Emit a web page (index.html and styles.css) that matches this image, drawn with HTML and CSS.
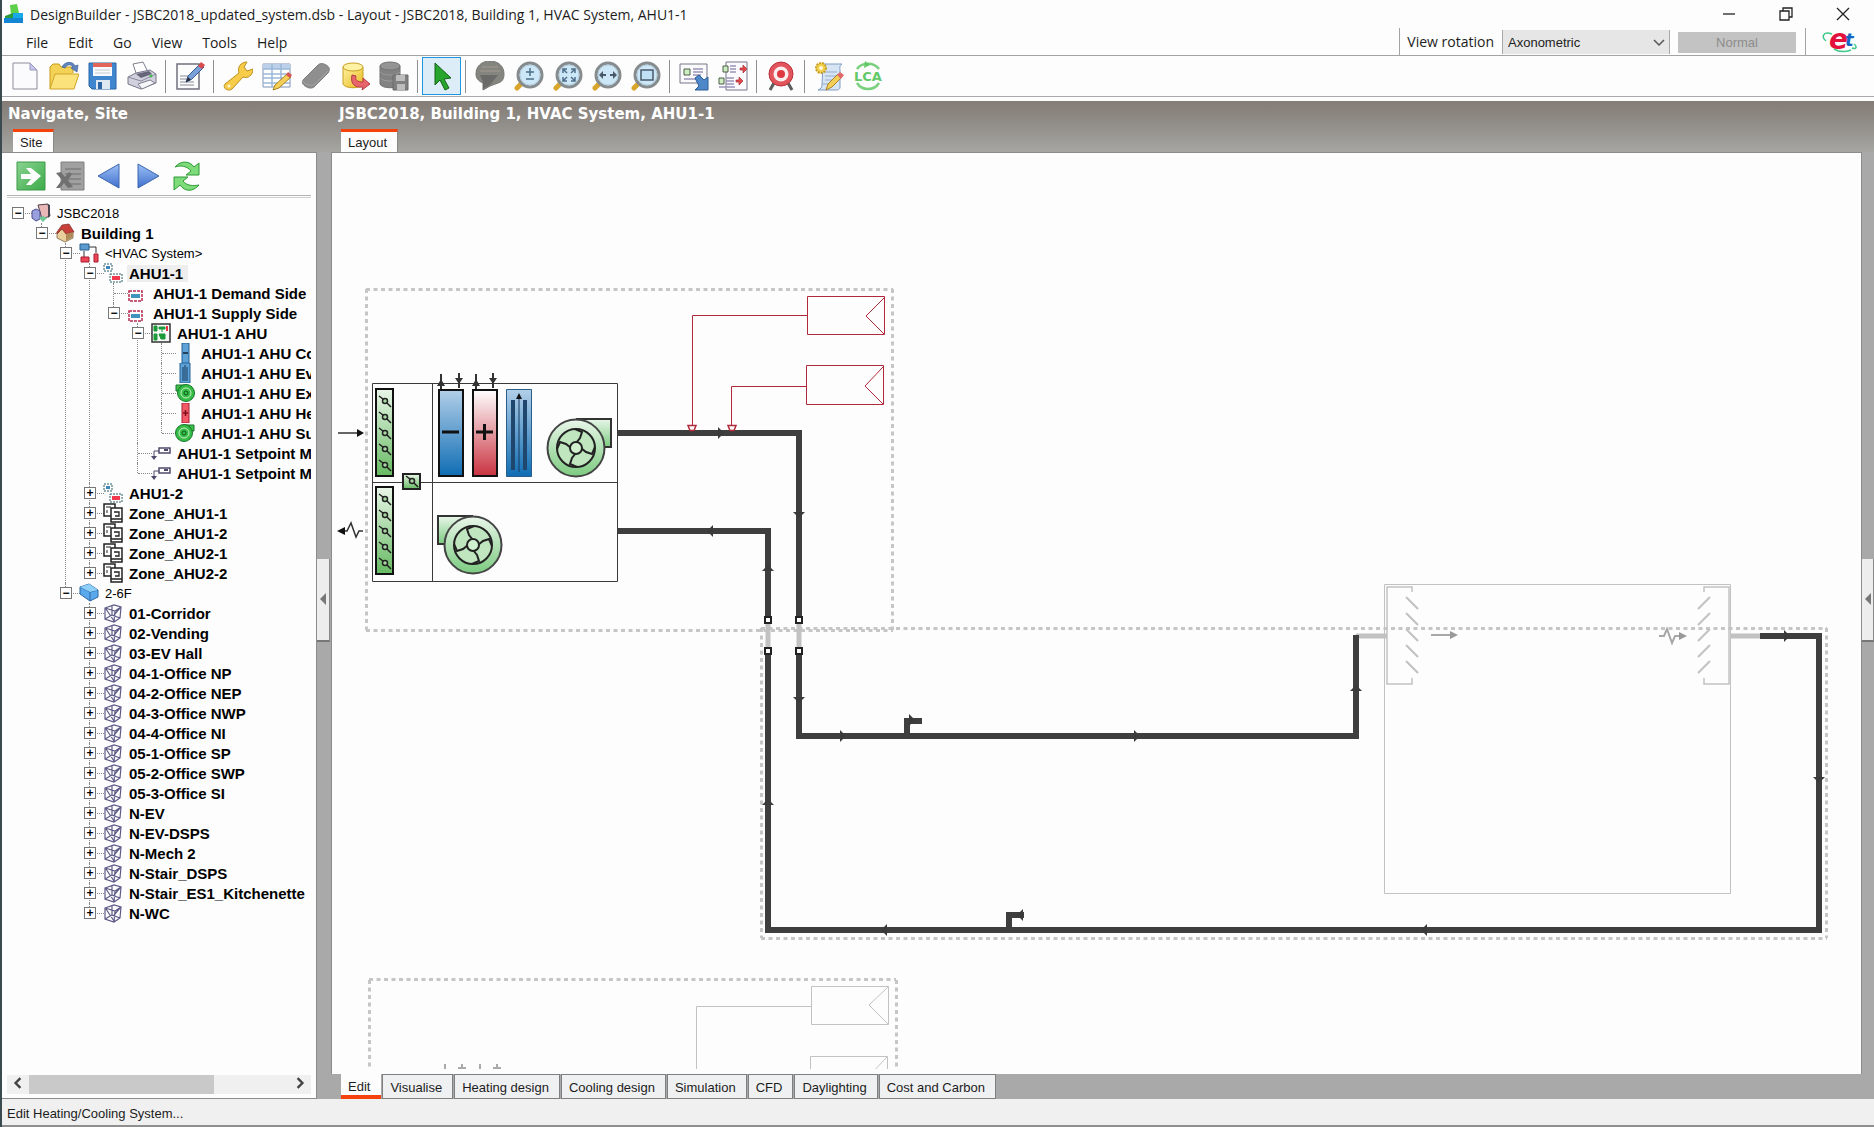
FILE: index.html
```html
<!DOCTYPE html>
<html lang="en">
<head>
<meta charset="utf-8">
<title>DesignBuilder - JSBC2018_updated_system.dsb</title>
<link rel="stylesheet" href="styles.css">
</head>
<body>

<svg class="defs" width="0" height="0" aria-hidden="true">
  <defs>
    <linearGradient id="g-green" x1="0" y1="0" x2="0" y2="1"><stop offset="0" stop-color="#e9f6ea"/><stop offset="1" stop-color="#7ccb80"/></linearGradient>
    <linearGradient id="g-damper" x1="0" y1="0" x2="0" y2="1"><stop offset="0" stop-color="#e9f6e8"/><stop offset="1" stop-color="#66ba62"/></linearGradient>
    <linearGradient id="g-blue" x1="0" y1="0" x2="0" y2="1"><stop offset="0" stop-color="#b2cfe8"/><stop offset="1" stop-color="#0f6db4"/></linearGradient>
    <linearGradient id="g-red" x1="0" y1="0" x2="0" y2="1"><stop offset="0" stop-color="#ffffff"/><stop offset="1" stop-color="#c93240"/></linearGradient>
    <linearGradient id="g-yellow" x1="0" y1="0" x2="1" y2="1"><stop offset="0" stop-color="#fff3a0"/><stop offset="1" stop-color="#e8b820"/></linearGradient>
    <linearGradient id="g-tri" x1="0" y1="0" x2="0" y2="1"><stop offset="0" stop-color="#9cc0f5"/><stop offset="1" stop-color="#3f6fcc"/></linearGradient>
    <linearGradient id="g-go" x1="0" y1="0" x2="1" y2="1"><stop offset="0" stop-color="#8ad391"/><stop offset="1" stop-color="#3bab48"/></linearGradient>

    <symbol id="i-new" viewBox="0 0 30 30"><path d="M3 2h17l7 7v19H3z" fill="#fbfbfd" stroke="#8d8d9c"/><path d="M20 2v7h7z" fill="#c9c6ee" stroke="#9a98c0"/></symbol>
    <symbol id="i-open" viewBox="0 0 30 30"><path d="M1 28V6l3-3h6l2 3h12v6" fill="#f3d255" stroke="#c79a1c"/><path d="M1 28l5-15h24l-5 15z" fill="#fbe27a" stroke="#d0a528"/><path d="M13 6c3-6 11-6 13-1l3-1-1 7-6-4 2-1c-2-3-6-3-8 1z" fill="#5f86c0" stroke="#3f5f96" stroke-width=".7"/></symbol>
    <symbol id="i-save" viewBox="0 0 30 30"><path d="M1 2h27v26H4l-3-3z" fill="#3f86cf" stroke="#2866a8"/><path d="M5 2h19v13H5z" fill="#f7f9fc"/><path d="M5 2h19v4H5z" fill="#e0665a"/><path d="M7 9h15M7 12h15" stroke="#c4ccd6"/><path d="M8 19h14v9H8z" fill="#dfe7f0"/><path d="M10 21h4v7h-4z" fill="#2c66a5"/></symbol>
    <symbol id="i-print" viewBox="0 0 30 30"><path d="M6 3l10-2 5 10-11 4z" fill="#fff" stroke="#80808e"/><path d="M1 16l8-4 14-3 6 4v9l-15 6-13-5z" fill="#d0d0de" stroke="#77778a"/><path d="M1 16l13 4 15-7" fill="none" stroke="#8a8a9c"/><path d="M9 13l13-3 3 3-11 4z" fill="#66667a"/><path d="M11 23l12-4 5 3-13 6z" fill="#f5f5fa" stroke="#80808e"/><circle cx="24" cy="15" r="1.500" fill="#43b94b"/></symbol>
    <symbol id="i-edit" viewBox="0 0 30 30"><path d="M2 3h22v25H2z" fill="#fcfcfd" stroke="#70707e" stroke-width="1.500"/><path d="M5 15h9M5 18h7M5 21h14M5 24h14" stroke="#8a8a98"/><path d="M11 21l2-6L25 3l4 3-12 12z" fill="#7aa0d8" stroke="#3a5c96"/><path d="M23 5l3-4 4 3-3 4z" fill="#d94a4a"/><path d="M11 21l2-5 3 3z" fill="#2b2b36"/></symbol>
    <symbol id="i-wrench" viewBox="0 0 30 30"><path d="M2 23L16 12C14 6 18 1 24 1l-3 5 3 4 6-2c0 6-5 10-10 8L9 28c-4 3-10-1-7-5z" fill="#f7cc4a" stroke="#bd8f1c"/><circle cx="6" cy="25" r="1.500" fill="#fff6cf"/></symbol>
    <symbol id="i-table" viewBox="0 0 30 30"><path d="M1 3h27v23H1z" fill="#fff" stroke="#7d93b5"/><path d="M1 3h27v5H1z" fill="#bcd0ea"/><path d="M1 8h27M1 13h27M1 17h27M1 22h27M10 3v23M19 3v23" stroke="#9ab6d8" stroke-width="1.500"/><path d="M11 29l2-5 12-11 4 3-12 11z" fill="#f4cf58" stroke="#a98426"/><path d="M24 14l2-3 4 3-2 3z" fill="#d95454"/></symbol>
    <symbol id="i-eraser" viewBox="0 0 30 30"><path d="M2 19L17 4c2-2 5-2 8 0 4 2 4 5 2 8L13 26c-3 2-6 1-9-1-3-2-3-4-2-6z" fill="#8f8f8f" stroke="#7c7c7c"/><path d="M2 20c3 4 7 5 11 4L27 10" fill="none" stroke="#a6a6a6"/></symbol>
    <symbol id="i-db" viewBox="0 0 30 30"><path d="M3 6v17c2 5 18 5 20 0V6z" fill="url(#g-yellow)" stroke="#c6a022"/><ellipse cx="13" cy="6" rx="10" ry="4" fill="#fff2a4" stroke="#c6a022"/><path d="M12 14c-2 9 3 13 11 12l-1 3 8-6-7-6v4c-6 0-8-2-7-6z" fill="#e8656c" stroke="#b43b44"/></symbol>
    <symbol id="i-dbsave" viewBox="0 0 30 30"><path d="M1 5v18c2 5 18 5 20 0V5z" fill="#828282" stroke="#707070"/><ellipse cx="11" cy="5" rx="10" ry="4" fill="#949494" stroke="#757575"/><path d="M1 11c3 4 17 4 20 0M1 17c3 4 17 4 20 0" fill="none" stroke="#9a9a9a"/><path d="M14 14h15v15H14z" fill="#808080" stroke="#6a6a6a"/><path d="M17 14h9v6h-9zM18 23h8v6h-8z" fill="#bdbdbd"/></symbol>
    <symbol id="i-cursor" viewBox="0 0 30 30"><path d="M8 2l16 15-7 1 5 9-4 2-5-10-5 5z" fill="#27a52c" stroke="#146218"/></symbol>
    <symbol id="i-balloon" viewBox="0 0 30 30"><path d="M15 0c8 0 14 5 14 13 0 5-2 8-6 9l-8 3-7 4v-7C3 20 1 17 1 13 1 5 7 0 15 0z" fill="#85857f" stroke="#757572"/><path d="M7 6h16M5 10h20" stroke="#a3998f"/><path d="M5 14h18l-8 10-7 4v-7z" fill="#6a6a68"/></symbol>
    <symbol id="i-lens" viewBox="0 0 30 30"><path d="M3 27l4-4" stroke="#d9a52a" stroke-width="5" stroke-linecap="round"/><circle cx="16" cy="14" r="12" fill="#cbe7f8" stroke="#868b8e" stroke-width="3"/><circle cx="16" cy="14" r="10" fill="none" stroke="#b5ccd9"/></symbol>
    <symbol id="i-export" viewBox="0 0 30 30"><path d="M1 3h27v19H1z" fill="#fafafc" stroke="#77778a"/><path d="M5 8h6v6H5z" fill="#cdeec0" stroke="#4d5d4a"/><path d="M14 8h10M14 11h10M14 14h8M5 18h14" stroke="#9a94b8" stroke-width="1.500"/><path d="M16 17l4-3 5 5 4-3v13H16l4-4z" fill="#4f88c8" stroke="#2c5c98"/></symbol>
    <symbol id="i-map" viewBox="0 0 30 30"><path d="M8 1h21v28H8z" fill="#fbfbfd" stroke="#77778a"/><path d="M5 5h5v6H5zM1 17h5v6H1z" fill="#cdeec0" stroke="#4d5d4a"/><path d="M12 5h6M12 8h6M12 11h6M8 17h8M8 20h8M8 23h8M1 26h16" stroke="#9a94b8" stroke-width="1.500"/><path d="M22 7h3V4l4 4-4 4V9h-3zM18 19h3v-3l4 4-4 4v-3h-3z" fill="#e4474a" stroke="#a82f33" stroke-width=".7"/></symbol>
    <symbol id="i-target" viewBox="0 0 30 30"><path d="M8 22l-4 7M22 22l4 7" stroke="#5d5d5d" stroke-width="3"/><circle cx="15" cy="13" r="12" fill="#e2555c" stroke="#b93037"/><circle cx="15" cy="13" r="7.500" fill="#fbeeee"/><circle cx="15" cy="13" r="4" fill="#dd3a42"/></symbol>
    <symbol id="i-script" viewBox="0 0 30 30"><path d="M9 3h19c-3 2-2 4-2 6v17c0 3-3 3-4 3H4c3-1 4-3 4-5z" fill="#d6e4f4" stroke="#7f9cc2"/><path d="M11 11h12M11 15h12M11 19h8M8 23h8" stroke="#93aece"/><circle cx="7" cy="7" r="5" fill="#f4cf4a" stroke="#c9a02a" stroke-width="2" stroke-dasharray="2 1"/><circle cx="7" cy="7" r="2" fill="#fff8d8"/><path d="M12 29l2-6 10-10 4 3-10 10z" fill="#f4cf58" stroke="#a98426"/><path d="M23 14l3-3 4 3-3 4z" fill="#e06a6a"/></symbol>
    <symbol id="i-lca" viewBox="0 0 30 30"><path d="M4 8C8 2 20 0 26 8M4 22c5 8 17 8 22 0" fill="none" stroke="#7ad07e" stroke-width="2.500"/><path d="M12 0l5 4-6 3z" fill="#63c968"/><text x="15" y="20" text-anchor="middle" font-family="DejaVu Sans, sans-serif" font-weight="700" font-size="13" fill="#63c968">LCA</text></symbol>
    <symbol id="i-go" viewBox="0 0 30 30"><path d="M1 1h28v28H1z" fill="url(#g-go)" stroke="#3c9a46"/><path d="M5 13h10l-5-6h5l10 8-10 9h-5l5-6H5z" fill="#fff"/></symbol>
    <symbol id="i-del" viewBox="0 0 30 30"><path d="M6 1h23v28H6z" fill="#a0a0a0" stroke="#808080"/><path d="M10 8h16M10 13h16M10 18h16M10 23h16" stroke="#7d7d7d" stroke-width="1.500"/><path d="M1 12l5-1 4 5 4-5 3 2-4 6 5 7-5 1-4-5-4 5H1l6-8z" fill="#707070"/></symbol>
    <symbol id="i-prev" viewBox="0 0 30 30"><path d="M25 3v24L4 15z" fill="url(#g-tri)" stroke="#3d66b0"/></symbol>
    <symbol id="i-next" viewBox="0 0 30 30"><path d="M5 3v24l21-12z" fill="url(#g-tri)" stroke="#3d66b0"/></symbol>
    <symbol id="i-refresh" viewBox="0 0 30 30"><path d="M3 6C9-1 18 0 22 6l5-4v12H14l5-4C15 5 9 4 3 6z" fill="#7ddb7a" stroke="#2e9a35"/><path d="M27 24C21 31 13 31 8 24l-6 5V16h14l-5 4c4 5 10 5 16 4z" fill="#7ddb7a" stroke="#2e9a35"/></symbol>

    <symbol id="t-site" viewBox="0 0 20 20"><path d="M7 2l10-1 2 12-8 3z" fill="#e9b8b6" stroke="#4c3f46"/><path d="M17 1l2 1v11l-2 2z" fill="#4a4550"/><path d="M1 8l4-2 4 2v8l-4 2-4-3z" fill="#9aa0dd" stroke="#4b4a8a"/><path d="M8 15l4-2 4 2-4 4z" fill="#6fc794"/></symbol>
    <symbol id="t-house" viewBox="0 0 20 20"><path d="M2 9v6l8 4 8-4V8l-7-5z" fill="#e8cf9c" stroke="#6a5334" stroke-width=".7"/><path d="M2 9l5-7 7-1 5 8-8 2-4-5-5 5z" fill="#c8403a" stroke="#7c2622" stroke-width=".7"/><path d="M11 11v7l7-4V9z" fill="#b08a58"/></symbol>
    <symbol id="t-hvac" viewBox="0 0 20 20"><path d="M5 8v8M10 4h7v6" fill="none" stroke="#333"/><path d="M1 1h9v6H1z" fill="#5b9bd0" stroke="#27608f"/><path d="M2 14h8v5H2zM15 11h4v8h-4z" fill="#ee4457" stroke="#a51e30"/></symbol>
    <symbol id="t-loop" viewBox="0 0 20 20"><path d="M1 1h8v7H1zM7 11h12v8H7z" fill="#fff" stroke="#2d5f66" stroke-dasharray="2 1"/><path d="M3 3h4v3H3z" fill="#3c86b8"/><path d="M9 13h8v4H9z" fill="#f0384e"/></symbol>
    <symbol id="t-side" viewBox="0 0 20 20"><path d="M2 8h13v10H2z" fill="#fff" stroke="#b52a52" stroke-width="1.500" stroke-dasharray="3 1"/><path d="M4 11h9v4H4z" fill="#3f93bd"/></symbol>
    <symbol id="t-ahu" viewBox="0 0 20 20"><path d="M1 1h18v18H1z" fill="#f7faf7" stroke="#333" stroke-width="1.500"/><path d="M3 3h3v5H3zM3 11h3v6H3zM8 4h6v2H8zM11 4v5M8 11h6v5h-4z" fill="#1b9a38" stroke="#1b9a38"/><path d="M15 3h2v5h-2z" fill="#ee2f42"/></symbol>
    <symbol id="t-cool" viewBox="0 0 20 20"><path d="M7 0h7v20H7z" fill="#5fa2d6" stroke="#235f92"/><path d="M8 10h5" stroke="#123" stroke-width="1.500"/></symbol>
    <symbol id="t-humid" viewBox="0 0 20 20"><path d="M5 0h10v20H5z" fill="#5fa2d6" stroke="#235f92"/><path d="M8 4v14M10 2v16M12 4v14" stroke="#12395c"/></symbol>
    <symbol id="t-heat" viewBox="0 0 20 20"><path d="M7 0h7v20H7z" fill="#f35a68" stroke="#a61f30"/><path d="M8 10h5M10.500 7v6" stroke="#7c0f1c" stroke-width="1.500"/></symbol>
    <symbol id="t-fan" viewBox="0 0 20 20"><path d="M1 2h9v6H1z" fill="#41c24d" stroke="#14752a"/><circle cx="11" cy="10" r="8.500" fill="#35bd45" stroke="#14752a"/><circle cx="11" cy="10" r="5" fill="none" stroke="#c9f0c8"/><circle cx="11" cy="10" r="2" fill="none" stroke="#0d5a1d"/></symbol>
    <symbol id="t-set" viewBox="0 0 20 20"><path d="M3 13V8h5" fill="none" stroke="#4f4a6c"/><path d="M8 5h11v5H8z" fill="#fff" stroke="#4f4a6c" stroke-width="1.500"/><path d="M13 7h4" stroke="#4f4a6c" stroke-width="2"/><path d="M0 13h6l-3 4z" fill="#4f4a6c"/></symbol>
    <symbol id="t-zone" viewBox="0 0 20 20"><path d="M1 1h11v12H1z" fill="#fff" stroke="#222" stroke-width="1.500"/><path d="M3 4h5M4 10V7" stroke="#222"/><path d="M8 5h11v14H8z" fill="#fff" stroke="#222" stroke-width="1.500"/><path d="M8 16h11M11 9h5v4h-4" fill="none" stroke="#222" stroke-width="1.300"/></symbol>
    <symbol id="t-block" viewBox="0 0 20 20"><path d="M1 4l9-3 9 6v7l-8 4L1 11z" fill="#5aa9ec" stroke="#2b67a3"/><path d="M1 4l10 5 8-2M11 9v9" fill="none" stroke="#2b67a3"/><path d="M1 4l9-3 9 6-8 2z" fill="#8fd0fa"/></symbol>
    <symbol id="t-cube" viewBox="0 0 20 20"><path d="M2 5l9-3 7 2-1 11-6 4-9-3zM2 5l10 3 6-4M12 8l-1 11M9 3v9l8 3M9 12l-7 4M3 6l8 12M17 5l-6 7" fill="none" stroke="#5c5a86" stroke-width="1.200"/></symbol>

    <symbol id="fan" viewBox="0 0 66 62" overflow="visible">
      <path d="M31 2h35v28h-9" fill="url(#g-green)" stroke="#333" stroke-width="2"/>
      <circle cx="31" cy="31" r="28.500" fill="url(#g-green)" stroke="#444" stroke-width="2"/>
      <circle cx="31" cy="31" r="19" fill="#bfe6bf" stroke="#222" stroke-width="2"/>
      <g fill="none" stroke="#222" stroke-width="2"><path id="blade" d="M30 12l7 3-2 6-4 5"/><use href="#blade" transform="rotate(90 31 31)"/><use href="#blade" transform="rotate(180 31 31)"/><use href="#blade" transform="rotate(270 31 31)"/></g>
      <circle cx="31" cy="31" r="6" fill="#d0f0cf" stroke="#222" stroke-width="2"/>
    </symbol>
    <g id="vane"><path d="M-6-5l4 3h2M0 0l6 6" fill="none" stroke="#222" stroke-width="1.500"/><circle r="2.500" fill="#a8d8a4" stroke="#222" stroke-width="1.500"/></g>
    <g id="damper"><path d="M0 0h17v87H0z" fill="url(#g-damper)" stroke="#111" stroke-width="2"/><use href="#vane" x="9" y="12"/><use href="#vane" x="9" y="28"/><use href="#vane" x="9" y="44"/><use href="#vane" x="9" y="60"/><use href="#vane" x="9" y="76"/></g>
    <path id="flow" d="M-2-6v12l6-6z" fill="#3a3a3a"/>
    <path id="node" d="M-3-3h6v6h-6z" fill="#fff" stroke="#222" stroke-width="2"/>
    <g id="grille" fill="none" stroke="#c2c2c2" stroke-width="2"><path d="M26 6V1H1v97h25v-6" stroke-width="1.500"/><path d="M20 11l12 12M20 27l12 12M20 43l12 12M20 59l12 12M20 75l12 12"/></g>
  </defs>
</svg>

<header class="titlebar">
  <svg class="app-icon" viewBox="0 0 20 20" aria-hidden="true"><path d="M6 1l7-1 2 9-8 2z" fill="#5ed04a"/><path d="M1 12l8-3v9l-8 1z" fill="#2a9a3c"/><path d="M9 9h10v9H9z" fill="#18a9e8"/><path d="M0 14h19v5H0z" fill="#1286d4"/></svg>
  <h1>DesignBuilder - JSBC2018_updated_system.dsb - Layout - JSBC2018, Building 1, HVAC System, AHU1-1</h1>
  <div class="window-buttons">
    <button aria-label="Minimize"><svg viewBox="0 0 14 14"><path d="M1 7h12"/></svg></button>
    <button aria-label="Restore"><svg viewBox="0 0 14 14"><path d="M1 4h9v9H1zM4 4V1h9v9h-3"/></svg></button>
    <button aria-label="Close"><svg viewBox="0 0 14 14"><path d="M1 1l12 12M13 1L1 13"/></svg></button>
  </div>
</header>

<div class="menubar">
  <nav aria-label="Menu">
    <button>File</button><button>Edit</button><button>Go</button><button>View</button><button>Tools</button><button>Help</button>
  </nav>
  <div class="rotation">
    <label for="rotation">View rotation</label>
    <select id="rotation"><option>Axonometric</option></select>
    <button class="normal" disabled>Normal</button>
  </div>
  <div class="brand">
    <svg viewBox="0 0 40 26" role="img" aria-label="et"><path d="M12 6C3 3 1 9 6 13M32 20c5 2 5-2 2-4M31 22c-5 2-12 2-17-1" fill="none" stroke="#3fc98a" stroke-width="1.500"/><text x="9" y="21" font-family="DejaVu Sans, sans-serif" font-weight="700" font-style="italic" font-size="28" fill="#e3123c">e</text><text x="25" y="18" font-family="DejaVu Sans, sans-serif" font-weight="700" font-style="italic" font-size="18" fill="#1566c0">t</text></svg>
  </div>
</div>

<div class="toolbar" role="toolbar" aria-label="Main">
  <button aria-label="New"><svg><use href="#i-new"/></svg></button>
  <button aria-label="Open"><svg><use href="#i-open"/></svg></button>
  <button aria-label="Save"><svg><use href="#i-save"/></svg></button>
  <button aria-label="Print"><svg><use href="#i-print"/></svg></button>
  <i></i>
  <button aria-label="Edit"><svg><use href="#i-edit"/></svg></button>
  <i></i>
  <button aria-label="Options"><svg><use href="#i-wrench"/></svg></button>
  <button aria-label="Edit table"><svg><use href="#i-table"/></svg></button>
  <button aria-label="Erase"><svg><use href="#i-eraser"/></svg></button>
  <button aria-label="Load data"><svg><use href="#i-db"/></svg></button>
  <button aria-label="Save data"><svg><use href="#i-dbsave"/></svg></button>
  <i></i>
  <button class="pressed" aria-label="Select"><svg><use href="#i-cursor"/></svg></button>
  <i></i>
  <button aria-label="Orbit"><svg><use href="#i-balloon"/></svg></button>
  <button aria-label="Zoom"><svg viewBox="0 0 30 30"><use href="#i-lens"/><path d="M16 7v8M12 11h8M12 18h8" stroke="#4e6f88" stroke-width="1.500"/></svg></button>
  <button aria-label="Zoom extents"><svg viewBox="0 0 30 30"><use href="#i-lens"/><path d="M10 12V8h4M18 8h4v4M22 16v4h-4M14 20h-4v-4M10 8l4 4M22 8l-4 4M22 20l-4-4M10 20l4-4" fill="none" stroke="#4e6f88" stroke-width="1.500"/></svg></button>
  <button aria-label="Zoom width"><svg viewBox="0 0 30 30"><use href="#i-lens"/><path d="M8 14h6M18 14h6" stroke="#4a5a68" stroke-width="2"/><path d="M7 14l4-4v8zM25 14l-4-4v8z" fill="#4a5a68"/></svg></button>
  <button aria-label="Zoom window"><svg viewBox="0 0 30 30"><use href="#i-lens"/><path d="M10 9h12v10H10z" fill="#bfe0f5" stroke="#4a5a68" stroke-width="1.500"/></svg></button>
  <i></i>
  <button aria-label="Export"><svg><use href="#i-export"/></svg></button>
  <button aria-label="Mapping"><svg><use href="#i-map"/></svg></button>
  <i></i>
  <button aria-label="Target"><svg><use href="#i-target"/></svg></button>
  <i></i>
  <button aria-label="Script"><svg><use href="#i-script"/></svg></button>
  <button aria-label="LCA"><svg><use href="#i-lca"/></svg></button>
</div>

<div class="workspace">
  <aside class="side">
    <h2>Navigate, Site</h2>
    <div class="tabs"><button>Site</button></div>
    <div class="pane">
      <div class="side-tools">
        <button aria-label="Go"><svg><use href="#i-go"/></svg></button>
        <button aria-label="Delete"><svg><use href="#i-del"/></svg></button>
        <button aria-label="Back"><svg><use href="#i-prev"/></svg></button>
        <button aria-label="Forward"><svg><use href="#i-next"/></svg></button>
        <button aria-label="Refresh"><svg><use href="#i-refresh"/></svg></button>
      </div>
      <ul class="tree">
        <li><div class="row"><button aria-label="Collapse">−</button><svg><use href="#t-site"/></svg><span class="plain">JSBC2018</span></div>
          <ul>
            <li><div class="row"><button aria-label="Collapse">−</button><svg><use href="#t-house"/></svg><span>Building 1</span></div>
              <ul>
                <li><div class="row"><button aria-label="Collapse">−</button><svg><use href="#t-hvac"/></svg><span class="plain">&lt;HVAC System&gt;</span></div>
                  <ul>
                    <li><div class="row"><button aria-label="Collapse">−</button><svg><use href="#t-loop"/></svg><span class="selected">AHU1-1</span></div>
                      <ul>
                        <li><div class="row leaf"><svg><use href="#t-side"/></svg><span>AHU1-1 Demand Side</span></div></li>
                        <li><div class="row"><button aria-label="Collapse">−</button><svg><use href="#t-side"/></svg><span>AHU1-1 Supply Side</span></div>
                          <ul>
                            <li><div class="row"><button aria-label="Collapse">−</button><svg><use href="#t-ahu"/></svg><span>AHU1-1 AHU</span></div>
                              <ul>
                                <li><div class="row leaf"><svg><use href="#t-cool"/></svg><span>AHU1-1 AHU Cooling Coil</span></div></li>
                                <li><div class="row leaf"><svg><use href="#t-humid"/></svg><span>AHU1-1 AHU Evaporative</span></div></li>
                                <li><div class="row leaf"><svg><use href="#t-fan"/></svg><span>AHU1-1 AHU Extract Fan</span></div></li>
                                <li><div class="row leaf"><svg><use href="#t-heat"/></svg><span>AHU1-1 AHU Heating Coil</span></div></li>
                                <li><div class="row leaf"><svg class="flip"><use href="#t-fan"/></svg><span>AHU1-1 AHU Supply Fan</span></div></li>
                              </ul>
                            </li>
                            <li><div class="row leaf"><svg><use href="#t-set"/></svg><span>AHU1-1 Setpoint Manager</span></div></li>
                            <li><div class="row leaf"><svg><use href="#t-set"/></svg><span>AHU1-1 Setpoint Manager</span></div></li>
                          </ul>
                        </li>
                      </ul>
                    </li>
                    <li><div class="row"><button aria-label="Expand">+</button><svg><use href="#t-loop"/></svg><span>AHU1-2</span></div></li>
                    <li><div class="row"><button aria-label="Expand">+</button><svg><use href="#t-zone"/></svg><span>Zone_AHU1-1</span></div></li>
                    <li><div class="row"><button aria-label="Expand">+</button><svg><use href="#t-zone"/></svg><span>Zone_AHU1-2</span></div></li>
                    <li><div class="row"><button aria-label="Expand">+</button><svg><use href="#t-zone"/></svg><span>Zone_AHU2-1</span></div></li>
                    <li><div class="row"><button aria-label="Expand">+</button><svg><use href="#t-zone"/></svg><span>Zone_AHU2-2</span></div></li>
                  </ul>
                </li>
                <li><div class="row"><button aria-label="Collapse">−</button><svg><use href="#t-block"/></svg><span class="plain">2-6F</span></div>
                  <ul>
                    <li><div class="row"><button aria-label="Expand">+</button><svg><use href="#t-cube"/></svg><span>01-Corridor</span></div></li>
                    <li><div class="row"><button aria-label="Expand">+</button><svg><use href="#t-cube"/></svg><span>02-Vending</span></div></li>
                    <li><div class="row"><button aria-label="Expand">+</button><svg><use href="#t-cube"/></svg><span>03-EV Hall</span></div></li>
                    <li><div class="row"><button aria-label="Expand">+</button><svg><use href="#t-cube"/></svg><span>04-1-Office NP</span></div></li>
                    <li><div class="row"><button aria-label="Expand">+</button><svg><use href="#t-cube"/></svg><span>04-2-Office NEP</span></div></li>
                    <li><div class="row"><button aria-label="Expand">+</button><svg><use href="#t-cube"/></svg><span>04-3-Office NWP</span></div></li>
                    <li><div class="row"><button aria-label="Expand">+</button><svg><use href="#t-cube"/></svg><span>04-4-Office NI</span></div></li>
                    <li><div class="row"><button aria-label="Expand">+</button><svg><use href="#t-cube"/></svg><span>05-1-Office SP</span></div></li>
                    <li><div class="row"><button aria-label="Expand">+</button><svg><use href="#t-cube"/></svg><span>05-2-Office SWP</span></div></li>
                    <li><div class="row"><button aria-label="Expand">+</button><svg><use href="#t-cube"/></svg><span>05-3-Office SI</span></div></li>
                    <li><div class="row"><button aria-label="Expand">+</button><svg><use href="#t-cube"/></svg><span>N-EV</span></div></li>
                    <li><div class="row"><button aria-label="Expand">+</button><svg><use href="#t-cube"/></svg><span>N-EV-DSPS</span></div></li>
                    <li><div class="row"><button aria-label="Expand">+</button><svg><use href="#t-cube"/></svg><span>N-Mech 2</span></div></li>
                    <li><div class="row"><button aria-label="Expand">+</button><svg><use href="#t-cube"/></svg><span>N-Stair_DSPS</span></div></li>
                    <li><div class="row"><button aria-label="Expand">+</button><svg><use href="#t-cube"/></svg><span>N-Stair_ES1_Kitchenette</span></div></li>
                    <li><div class="row"><button aria-label="Expand">+</button><svg><use href="#t-cube"/></svg><span>N-WC</span></div></li>
                  </ul>
                </li>
              </ul>
            </li>
          </ul>
        </li>
      </ul>
      <div class="scrollbar">
        <button aria-label="Scroll left"><svg viewBox="0 0 10 10"><path d="M7 1L3 5l4 4"/></svg></button>
        <div class="track"><div class="thumb"></div></div>
        <button aria-label="Scroll right"><svg viewBox="0 0 10 10"><path d="M3 1l4 4-4 4"/></svg></button>
      </div>
    </div>
  </aside>

  <div class="splitter"><button aria-label="Hide navigator"></button></div>

  <main class="main">
    <h2>JSBC2018, Building 1, HVAC System, AHU1-1</h2>
    <div class="tabs"><button>Layout</button></div>
    <div class="canvas">
      <svg role="img" aria-label="HVAC loop layout">
        <g transform="translate(-332 -153)">
          <g fill="none" stroke="#c6c6c6" stroke-width="3" stroke-dasharray="4 3.500">
            <path d="M366 289.500h527M366.500 289v341M366 630.500h527M892.500 289v341"/>
            <path d="M761 628.500h1066M761.500 628v310M761 938.500h1066M1826.500 628v310"/>
            <path d="M369 979.500h527M369.500 980v100M896.500 980v100"/>
          </g>

          <!-- air handling unit -->
          <path d="M372.500 383.500h245v198h-245zM432.500 383v198M373 482.500h245" fill="none" stroke="#3a3a3a"/>
          <use href="#damper" x="376" y="389"/>
          <use href="#damper" x="376" y="487"/>
          <path d="M403 474h17v15h-17z" fill="url(#g-damper)" stroke="#222" stroke-width="2"/>
          <use href="#vane" x="412" y="481"/>
          <path d="M439 390h24v86h-24z" fill="url(#g-blue)" stroke="#111" stroke-width="2"/>
          <path d="M473 390h24v86h-24z" fill="url(#g-red)" stroke="#111" stroke-width="2"/>
          <path d="M506.500 389.500h25v87h-25z" fill="url(#g-blue)" stroke="#2b5e88"/>
          <path d="M513 400v70M525 400v70" stroke="#1f466c" stroke-width="4"/>
          <path d="M519 396v76" stroke="#15395c"/><path d="M516 399l3-6 3 6z" fill="#111"/>
          <path d="M442 432h17M476 432h17M484.500 424v16" stroke="#111" stroke-width="3"/>
          <path d="M441 374v15M459 373v15M476 374v15M493 373v15" stroke="#333" stroke-width="2"/>
          <path d="M437 386l4-7 4 7zM472 386l4-7 4 7zM455 378l4 6 4-6zM489 378l4 6 4-6z" fill="#333"/>
          <use href="#fan" x="545" y="417" width="66" height="62"/>
          <g transform="translate(504 514) scale(-1 1)"><use href="#fan" width="66" height="62"/></g>
          <path d="M338 433h22M363 531h-4l-3 6-5-14-4 8h-6" fill="none" stroke="#333" stroke-width="1.500"/>
          <path d="M357 429v8l7-4zM345 527v8l-8-4z" fill="#111"/>

          <!-- ducts -->
          <g fill="none" stroke="#c2c2c2" stroke-width="5"><path d="M768 620v31M799 620v31M1356 636h31M1731 636h30"/></g>
          <g fill="none" stroke="#3e3e3e" stroke-width="6">
            <path d="M618 433h181v184M618 531h150v86M799 652v84h557V635M768 652v278h1051V636h-59M907 736v-15h15M1009 930v-15h15"/>
          </g>
          <use href="#flow" x="720" y="433"/><use href="#flow" x="842" y="736"/><use href="#flow" x="1136" y="736"/><use href="#flow" x="1786" y="636"/>
          <use href="#flow" transform="translate(711 531) rotate(180)"/><use href="#flow" transform="translate(885 930) rotate(180)"/><use href="#flow" transform="translate(1425 930) rotate(180)"/><use href="#flow" transform="translate(1021 915) rotate(180)"/><use href="#flow" x="911" y="720"/>
          <use href="#flow" transform="translate(799 514) rotate(90)"/><use href="#flow" transform="translate(799 699) rotate(90)"/><use href="#flow" transform="translate(1819 779) rotate(90)"/>
          <use href="#flow" transform="translate(768 569) rotate(-90)"/><use href="#flow" transform="translate(768 803) rotate(-90)"/><use href="#flow" transform="translate(1356 689) rotate(-90)"/>
          <use href="#node" x="768" y="620"/><use href="#node" x="799" y="620"/><use href="#node" x="768" y="651"/><use href="#node" x="799" y="651"/>

          <!-- setpoint managers -->
          <g fill="none" stroke="#b02a3c">
            <path d="M807.500 296.500h77v38h-77zM884 298l-18 18 18 18M807 315.500H692.500V425M806.500 365.500h77v39h-77zM883 367l-18 19 18 18M806 386.500H731.500V425"/>
            <path d="M688 425.500h8l-2 5h-4zM728 425.500h8l-2 5h-4z" stroke-width="1.500"/>
          </g>

          <!-- zone -->
          <path d="M1384.500 584.500h346v309h-346z" fill="none" stroke="#c2c2c2"/>
          <use href="#grille" x="1386" y="586"/>
          <g transform="translate(1730 586) scale(-1 1)"><use href="#grille"/></g>
          <path d="M1431 635h20M1659 636h5l3-7 5 14 3-7h5" fill="none" stroke="#a8a8a8" stroke-width="2"/>
          <path d="M1450 631v8l8-4zM1679 632v8l8-4z" fill="#999"/>

          <!-- second loop -->
          <g fill="none" stroke="#c2c2c2">
            <path d="M811.500 986.500h77v38h-77zM888 987l-19 18 19 19M811 1006.500H696.500V1080M810.500 1080v-23.500h77v23.500M887 1057l-18 19"/>
            <path d="M445 1064v9M462 1064v5M480 1064v9M497 1064v5M458 1068h8M493 1068h8" stroke="#aaa" stroke-width="2"/>
          </g>
        </g>
      </svg>
    </div>
    <div class="view-tabs">
      <button class="active">Edit</button><button>Visualise</button><button>Heating design</button><button>Cooling design</button><button>Simulation</button><button>CFD</button><button>Daylighting</button><button>Cost and Carbon</button>
    </div>
  </main>

  <div class="splitter right"><button aria-label="Show info panel"></button></div>
</div>

<footer class="status">Edit Heating/Cooling System...</footer>
</body>
</html>
```
FILE: styles.css
```css
* { box-sizing: border-box; }

body {
  margin: 0;
  height: 100vh;
  display: flex;
  flex-direction: column;
  border-left: 2px solid #3b4a4e;
  background: #fdfdfd;
  color: #1c1c1c;
  font: 13px "Liberation Sans", Arial, sans-serif;
  overflow: hidden;
}

button {
  margin: 0;
  padding: 0;
  border: 0;
  background: none;
  color: inherit;
  font: inherit;
}

h1, h2 { margin: 0; }

.defs { position: absolute; }

/* title bar */
.titlebar {
  display: flex;
  align-items: center;
  height: 28px;
  padding: 0 3px 0 2px;
}
.app-icon { width: 20px; height: 20px; }
h1 {
  flex: 1;
  margin-left: 6px;
  font: 14px "Open Sans", sans-serif;
  white-space: nowrap;
}
.window-buttons { display: flex; }
.window-buttons button {
  display: grid;
  place-items: center;
  width: 57px;
  height: 26px;
}
.window-buttons svg {
  width: 14px;
  height: 14px;
  fill: none;
  stroke: #222;
  stroke-width: 1.3;
}

/* menu row */
.menubar {
  display: flex;
  height: 28px;
  border-bottom: 1px solid #a3a3a3;
  font: 14px "Open Sans", sans-serif;
}
.menubar nav {
  display: flex;
  flex: 1;
  gap: 20px;
  padding: 1px 0 0 24px;
}
.rotation {
  display: flex;
  align-items: center;
  border-left: 1px solid #a3a3a3;
  padding-left: 7px;
}
.rotation select {
  appearance: none;
  width: 168px;
  height: 24px;
  margin: 1px 8px 0;
  padding: 0 5px;
  border: 1px solid #a8a8a8;
  border-width: 0 1px;
  border-radius: 0;
  background: #e6e6e6 url("data:image/svg+xml,%3Csvg xmlns='http://www.w3.org/2000/svg' width='12' height='8'%3E%3Cpath d='M1 1l5 5 5-5' fill='none' stroke='%23555' stroke-width='1.5'/%3E%3C/svg%3E") 150px 9px no-repeat;
  color: #222;
  font: 13px "Liberation Sans", Arial, sans-serif;
}
.normal {
  width: 118px;
  height: 21px;
  margin: 1px 9px 0 0;
  background: #c3c3c3;
  color: #8c8c8c;
  font: 13px "Liberation Sans", Arial, sans-serif;
}
.brand {
  width: 69px;
  border-left: 1px solid #a3a3a3;
  text-align: center;
}
.brand svg { width: 40px; height: 26px; }

/* toolbar */
.toolbar {
  display: flex;
  align-items: center;
  height: 41px;
  padding-left: 3px;
  border-bottom: 1px solid #a9a9ac;
}
.toolbar button,
.side-tools button {
  display: grid;
  place-items: center;
  width: 39px;
  height: 38px;
}
.toolbar svg,
.side-tools svg { width: 30px; height: 30px; }
.toolbar i {
  width: 1px;
  height: 33px;
  margin: 0 4px;
  background: #8f8f8f;
}
.toolbar .pressed {
  border: 1px solid #1e96e0;
  background: #dcedf8;
}

/* workspace */
.workspace {
  display: flex;
  flex: 1;
  min-height: 0;
  margin-top: 4px;
  background:
    linear-gradient(#857c76, #8f8b86 40%, #a6a6a3) 0 0 / 100% 51px no-repeat,
    #a9a9a9;
}
h2 {
  height: 28px;
  padding-left: 6px;
  color: #fff;
  font: bold 15px/26px "DejaVu Sans", Verdana, sans-serif;
  white-space: nowrap;
}
.tabs {
  height: 23px;
  padding-left: 11px;
}
.tabs button {
  height: 24px;
  padding: 0 8px 0 7px;
  border-top: 3px solid #f5420c;
  border-right: 1px solid #888;
  background: #fdfdfd;
}

.side {
  display: flex;
  flex-direction: column;
  width: 315px;
}
.side .tabs button { padding: 0 11px 0 7px; }
.pane {
  display: flex;
  flex: 1;
  flex-direction: column;
  min-height: 0;
  padding: 0 5px 4px;
  border: 1px solid #8c8c8c;
  border-left: 0;
  background: #fdfdfd;
}
.side-tools {
  display: flex;
  align-items: flex-end;
  height: 43px;
  padding-left: 4px;
  border-bottom: 1px solid #b4b4b4;
}

/* tree */
.tree {
  flex: 1;
  min-height: 0;
  margin: 1px 0 0;
  padding: 5px 0 0;
  border-top: 1px solid #d0d0d0;
  overflow: hidden;
  font-size: 15px;
  font-weight: bold;
  color: #000;
}
.tree, .tree ul { list-style: none; }
.tree ul {
  margin: 0;
  padding: 0 0 0 24px;
}
.tree li { position: relative; }
.tree ul > li::before {
  content: "";
  position: absolute;
  top: 0;
  bottom: 0;
  left: 10px;
  border-left: 1px dotted #888;
}
.tree ul > li:last-child::before {
  bottom: auto;
  height: 10px;
}
.row {
  position: relative;
  display: flex;
  align-items: center;
  height: 20px;
  padding-left: 5px;
  white-space: nowrap;
}
.row::before {
  content: "";
  position: absolute;
  left: 11px;
  top: 10px;
  width: 14px;
  border-top: 1px dotted #888;
}
.row button {
  position: relative;
  width: 12px;
  height: 12px;
  border: 1px solid #777;
  background: #fff;
  font: bold 12px/8px "Liberation Sans", Arial, sans-serif;
  flex: none;
}
.row svg {
  position: relative;
  flex: none;
  width: 20px;
  height: 20px;
  margin: 0 4px 0 7px;
}
.row.leaf svg { margin-left: 19px; }
.row svg.flip { transform: scaleX(-1); }
.row span { padding: 0 2px; }
.row .plain {
  font-size: 13px;
  font-weight: normal;
}
.row .selected {
  padding-right: 5px;
  background: #eeeeee;
}

.scrollbar {
  display: flex;
  height: 19px;
  background: #f0f0f0;
}
.scrollbar button { width: 22px; }
.scrollbar svg {
  width: 12px;
  height: 12px;
  fill: none;
  stroke: #444;
  stroke-width: 2;
}
.track { flex: 1; }
.thumb {
  width: 71%;
  height: 100%;
  background: #c9c9c9;
}

/* splitters */
.splitter {
  display: flex;
  align-items: center;
  width: 14px;
}
.splitter button {
  display: grid;
  place-items: center;
  width: 13px;
  height: 83px;
  border-right: 1px solid #888;
  border-bottom: 2px solid #777;
  background: #ededed;
}
.splitter button::before {
  content: "";
  border: 6px solid transparent;
  border-right-color: #777;
  border-left: 0;
}
.splitter.right { width: 12px; }

/* layout view */
.main {
  display: flex;
  flex: 1;
  flex-direction: column;
  min-width: 0;
}
.main h2 { padding-left: 8px; }
.main .tabs { padding-left: 10px; }
.main .tabs button { padding: 0 10px 0 7px; }
.canvas {
  flex: 1;
  min-height: 0;
  padding-bottom: 5px;
  border: 1px solid #8c8c8c;
  border-bottom: 0;
  background: #fdfdfd;
}
.canvas > svg {
  display: block;
  width: 100%;
  height: 100%;
}
.view-tabs {
  display: flex;
  gap: 1px;
  height: 25px;
  padding-left: 10px;
}
.view-tabs button {
  padding: 2px 10px 0 7px;
  border: 1px solid #7f7f7f;
  background: #eff0f2;
  white-space: nowrap;
}
.view-tabs .active {
  padding: 4px 11px 0 7px;
  border: 0;
  border-bottom: 4px solid #f5420c;
  background: #fdfdfd;
}

/* status bar */
.status {
  height: 28px;
  padding-left: 5px;
  border-bottom: 2px solid #8f8f8f;
  background: #f0f0f0;
  line-height: 30px;
}
```
